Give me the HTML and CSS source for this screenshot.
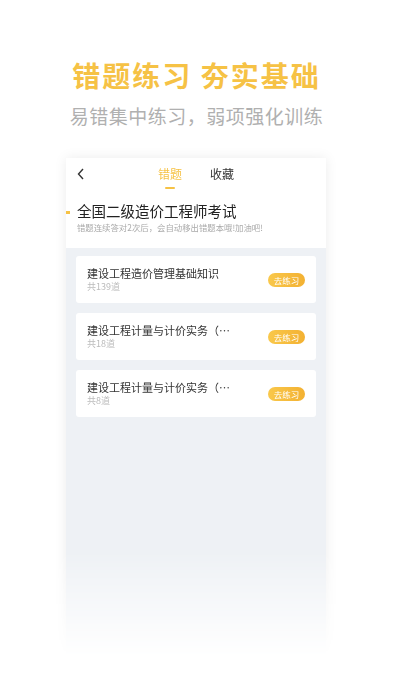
FILE: index.html
```html
<!DOCTYPE html>
<html>
<head>
  <title>错题练习</title>
  <link rel="stylesheet" href="styles.css">
</head>
<body>
  <div class="hero">
    <h1>错题练习 夯实基础</h1>
    <p>易错集中练习，弱项强化训练</p>
  </div>

  <div class="stage">
    <div class="phone">
      <div class="nav">
        <svg class="back" width="8" height="12" viewBox="0 0 8 12">
          <path d="M6 1 L1.5 6 L6 11" fill="none" stroke="#333" stroke-width="1.4"/>
        </svg>
        <div class="tabs">
          <span class="tab active">错题</span>
          <span class="tab">收藏</span>
        </div>
      </div>

      <div class="exam">
        <div class="exam-title">全国二级造价工程师考试</div>
        <div class="exam-tip">错题连续答对2次后，会自动移出错题本哦!加油吧!</div>
      </div>

      <div class="list">
        <div class="card">
          <div class="info">
            <div class="name">建设工程造价管理基础知识</div>
            <div class="count">共139道</div>
          </div>
          <span class="go">去练习</span>
        </div>
        <div class="card">
          <div class="info">
            <div class="name">建设工程计量与计价实务（…</div>
            <div class="count">共18道</div>
          </div>
          <span class="go">去练习</span>
        </div>
        <div class="card">
          <div class="info">
            <div class="name">建设工程计量与计价实务（…</div>
            <div class="count">共8道</div>
          </div>
          <span class="go">去练习</span>
        </div>
      </div>
    </div>
  </div>
</body>
</html>
```

FILE: styles.css
```css
/* page */

body {
  margin: 0;
  background: #fff;
  font-family: "Noto Sans CJK SC", "Noto Sans", sans-serif;
  overflow: hidden;
}

.hero {
  text-align: center;
  padding-top: 55px;
}

.hero h1 {
  margin: 0;
  font-size: 28px;
  line-height: 40px;
  font-weight: bold;
  color: #f6c245;
  letter-spacing: 2px;
}

.hero p {
  margin: 1px 0 0;
  font-size: 19px;
  line-height: 40px;
  color: #b0b0b0;
  letter-spacing: 0.5px;
}

/* phone frame */

.stage {
  padding: 20px 20px 0 66px;
  margin-top: 2px;
  width: 260px;
  -webkit-mask-image: linear-gradient(to bottom, #000 78%, transparent 98%);
  mask-image: linear-gradient(to bottom, #000 78%, transparent 98%);
}

.phone {
  width: 260px;
  height: 510px;
  background: #eef1f5;
  box-shadow: 0 0 12px rgba(0, 0, 0, 0.08);
}

.nav {
  position: relative;
  height: 31px;
  background: #fff;
  display: flex;
  align-items: center;
  justify-content: center;
}

.back {
  position: absolute;
  left: 11px;
  top: 10px;
}

.tabs {
  display: flex;
  gap: 28px;
}

.tab {
  position: relative;
  font-size: 12px;
  color: #333;
  line-height: 20px;
}

.tab.active {
  color: #f6c245;
}

.tab.active::after {
  content: "";
  position: absolute;
  left: 7px;
  bottom: -5px;
  width: 10px;
  height: 2px;
  border-radius: 1px;
  background: #f6c245;
}

.exam {
  position: relative;
  background: #fff;
  padding: 12px 11px 15px;
}

.exam::before {
  content: "";
  position: absolute;
  left: 0;
  top: 22px;
  width: 4px;
  height: 3px;
  background: #f6c245;
}

.exam-title {
  font-size: 14.5px;
  line-height: 20px;
  color: #222;
}

.exam-tip {
  font-size: 8.4px;
  line-height: 12px;
  color: #aaa;
}

.list {
  padding: 8px 10px;
  display: flex;
  flex-direction: column;
  gap: 10px;
}

.card {
  height: 47px;
  background: #fff;
  border-radius: 3px;
  display: flex;
  align-items: center;
  justify-content: space-between;
  padding: 0 11px;
}

.name {
  font-size: 11px;
  line-height: 15px;
  color: #333;
}

.count {
  font-size: 9px;
  line-height: 12px;
  color: #bbb;
}

.go {
  width: 37px;
  height: 14px;
  line-height: 14px;
  border-radius: 7px;
  text-align: center;
  font-size: 8.5px;
  color: #fff;
  background: linear-gradient(to right, #f9c84b, #f3b132);
}
```
